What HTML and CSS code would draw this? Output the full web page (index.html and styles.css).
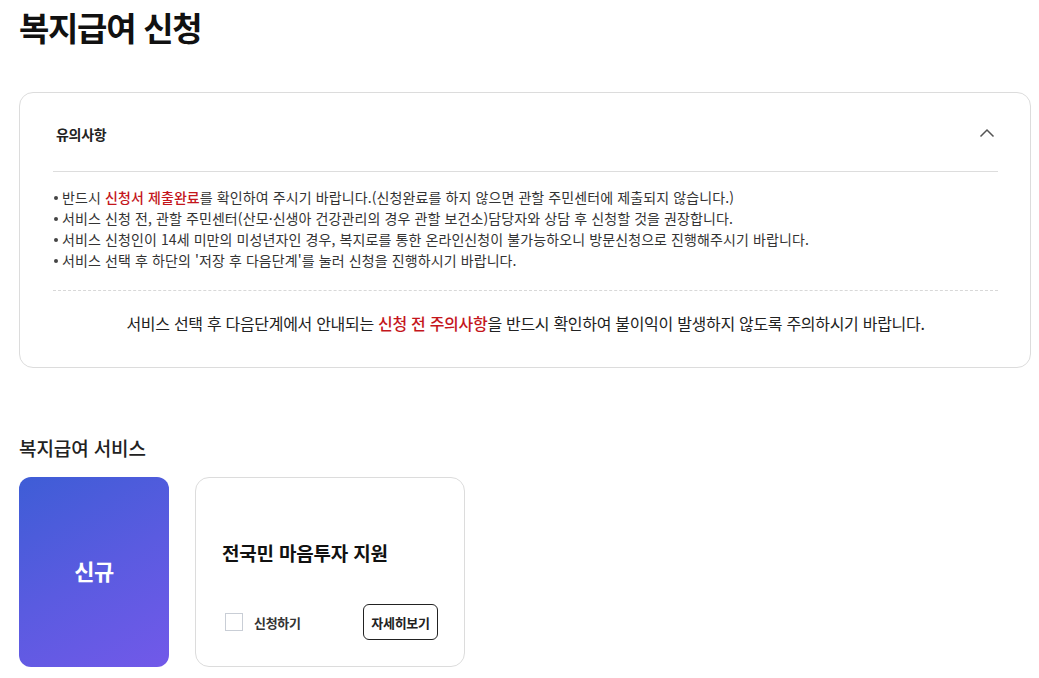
FILE: index.html
```html
<!DOCTYPE html>
<html lang="ko">
<head>
<meta charset="utf-8">
<title>복지급여 신청</title>
<link rel="stylesheet" href="styles.css">
</head>
<body>
<main class="page">
  <h1 class="page-title">복지급여 신청</h1>

  <section class="notice">
    <div class="notice-head">
      <h2 class="notice-title">유의사항</h2>
      <svg class="chevron" width="16" height="10" viewBox="0 0 16 10" aria-hidden="true">
        <path d="M1.5 8.5 L8 2 L14.5 8.5" fill="none" stroke="#555" stroke-width="1.5"/>
      </svg>
    </div>
    <ul class="notice-list">
      <li>반드시 <em class="red">신청서 제출완료</em>를 확인하여 주시기 바랍니다.(신청완료를 하지 않으면 관할 주민센터에 제출되지 않습니다.)</li>
      <li>서비스 신청 전, 관할 주민센터(산모·신생아 건강관리의 경우 관할 보건소)담당자와 상담 후 신청할 것을 권장합니다.</li>
      <li>서비스 신청인이 14세 미만의 미성년자인 경우, 복지로를 통한 온라인신청이 불가능하오니 방문신청으로 진행해주시기 바랍니다.</li>
      <li>서비스 선택 후 하단의 '저장 후 다음단계'를 눌러 신청을 진행하시기 바랍니다.</li>
    </ul>
    <p class="notice-foot">서비스 선택 후 다음단계에서 안내되는 <em class="red">신청 전 주의사항</em>을 반드시 확인하여 불이익이 발생하지 않도록 주의하시기 바랍니다.</p>
  </section>

  <section class="services">
    <h2 class="services-title">복지급여 서비스</h2>
    <div class="cards">
      <div class="badge-card">신규</div>
      <div class="service-card">
        <h3 class="service-name">전국민 마음투자 지원</h3>
        <div class="service-actions">
          <label class="apply">
            <span class="checkbox"></span>
            <span class="apply-text">신청하기</span>
          </label>
          <button class="detail-btn" type="button">자세히보기</button>
        </div>
      </div>
    </div>
  </section>
</main>
</body>
</html>
```

FILE: styles.css
```css
* { box-sizing: border-box; }

html, body {
  margin: 0;
  padding: 0;
  background: #fff;
}

body {
  font-family: "Noto Sans CJK KR", "Noto Sans", sans-serif;
  color: #333;
}

.page {
  padding: 0 8px 0 19px;
}

.page-title {
  margin: 0;
  padding-top: 4px;
  font-size: 33px;
  line-height: 46px;
  font-weight: 700;
  color: #111;
  letter-spacing: -1.3px;
}

.notice {
  margin-top: 42px;
  border: 1px solid #dcdcdc;
  border-radius: 14px;
  padding: 0 32px 33px 33px;
}

.notice-head {
  height: 79px;
  display: flex;
  align-items: center;
  justify-content: space-between;
  padding: 0 3px 0 3px;
  border-bottom: 1px solid #dddddd;
}

.notice-title {
  margin: 0;
  padding-top: 4px;
  font-size: 14px;
  font-weight: 700;
  color: #222;
  letter-spacing: -0.3px;
}

.chevron {
  display: block;
  margin-top: 2px;
}

.notice-list {
  list-style: none;
  margin: 0;
  padding: 15px 0 19px;
  border-bottom: 1px dashed #d8d8d8;
}

.notice-list li {
  position: relative;
  padding-left: 9px;
  font-size: 14px;
  line-height: 21px;
  color: #333;
  letter-spacing: 0.1px;
}

.notice-list li::before {
  content: "";
  position: absolute;
  left: 1px;
  top: 9px;
  width: 4px;
  height: 4px;
  border-radius: 50%;
  background: #444;
}

.red {
  font-style: normal;
  font-weight: 500;
  color: #c4161c;
}

.notice-foot {
  margin: 21px 0 0;
  text-align: center;
  font-size: 16px;
  line-height: 22px;
  color: #222;
  letter-spacing: -0.3px;
}

.services {
  margin-top: 66px;
}

.services-title {
  margin: 0 0 15px;
  font-size: 19px;
  line-height: 28px;
  font-weight: 500;
  color: #222;
  letter-spacing: -0.1px;
}

.cards {
  display: flex;
  gap: 26px;
}

.badge-card {
  width: 150px;
  height: 190px;
  border-radius: 12px;
  background: linear-gradient(150deg, #3e5dd6 0%, #5a5be0 50%, #7259e9 100%);
  color: #fff;
  font-size: 22px;
  font-weight: 700;
  display: flex;
  align-items: center;
  justify-content: center;
  padding-bottom: 4px;
  letter-spacing: -0.5px;
}

.service-card {
  width: 270px;
  height: 190px;
  border: 1px solid #dcdcdc;
  border-radius: 14px;
  padding: 61px 26px 26px 26px;
  display: flex;
  flex-direction: column;
}

.service-name {
  margin: 0;
  font-size: 19px;
  line-height: 28px;
  font-weight: 700;
  color: #111;
  letter-spacing: -0.2px;
}

.service-actions {
  margin-top: auto;
  display: flex;
  align-items: center;
  justify-content: space-between;
}

.apply {
  display: flex;
  align-items: center;
  gap: 11px;
  padding-left: 3px;
}

.checkbox {
  width: 18px;
  height: 18px;
  border: 1px solid #c9ced6;
  background: #fff;
}

.apply-text {
  font-size: 13px;
  font-weight: 700;
  color: #333;
  letter-spacing: -0.3px;
}

.detail-btn {
  width: 75px;
  height: 36px;
  border: 1px solid #222;
  border-radius: 6px;
  background: #fff;
  font-family: inherit;
  font-size: 13px;
  font-weight: 700;
  color: #222;
  padding: 0;
  letter-spacing: -0.3px;
}
```
